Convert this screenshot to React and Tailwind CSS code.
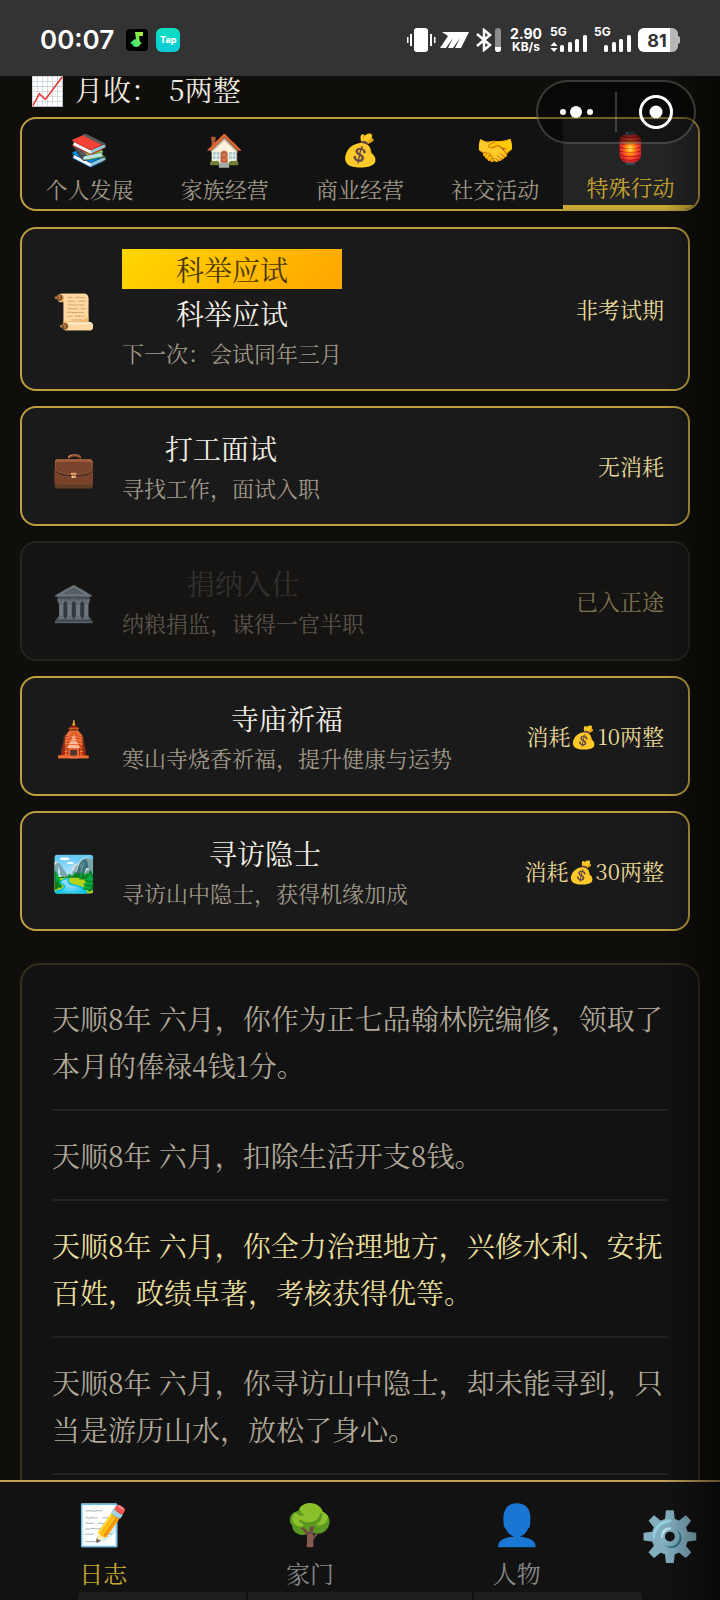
import { useState } from "react";

const tabs = [
  { id: 'self', icon: '📚', name: '个人发展' },
  { id: 'family', icon: '🏠', name: '家族经营' },
  { id: 'trade', icon: '💰', name: '商业经营' },
  { id: 'social', icon: '🤝', name: '社交活动' },
  { id: 'special', icon: '🏮', name: '特殊行动' },
];

const actions = [
  { icon: '📜', badge: '科举应试', name: '科举应试', desc: '下一次：会试同年三月', cost: '非考试期' },
  { icon: '💼', name: '打工面试', desc: '寻找工作，面试入职', cost: '无消耗' },
  { icon: '🏛️', name: '捐纳入仕', desc: '纳粮捐监，谋得一官半职', cost: '已入正途', disabled: true },
  { icon: '🛕', name: '寺庙祈福', desc: '寒山寺烧香祈福，提升健康与运势', cost: '消耗💰10两整' },
  { icon: '🏞️', name: '寻访隐士', desc: '寻访山中隐士，获得机缘加成', cost: '消耗💰30两整' },
];

const logs = [
  { text: '天顺8年 六月，你作为正七品翰林院编修，领取了本月的俸禄4钱1分。' },
  { text: '天顺8年 六月，扣除生活开支8钱。' },
  { text: '天顺8年 六月，你全力治理地方，兴修水利、安抚百姓，政绩卓著，考核获得优等。', good: true },
  { text: '天顺8年 六月，你寻访山中隐士，却未能寻到，只当是游历山水，放松了身心。' },
];

const pages = [
  { id: 'log', icon: '📝', name: '日志' },
  { id: 'home', icon: '🌳', name: '家门' },
  { id: 'people', icon: '👤', name: '人物' },
];

const Signal = ({ arrows }) => (
  <div className="relative w-10 h-7">
    <span className="absolute left-0 top-0 text-[12px] leading-3 font-bold">5G</span>
    <svg className="w-full h-full" viewBox="0 0 40 28" fill="#fff">
      {arrows && <path d="M4 16l3.5 4h-7zM4 26l3.5-4h-7z" />}
      <rect x="10" y="19" width="4" height="7" rx="1.5" />
      <rect x="18" y="16" width="4" height="10" rx="1.5" />
      <rect x="25" y="13" width="4" height="13" rx="1.5" />
      <rect x="33" y="9" width="4" height="17" rx="1.5" />
    </svg>
  </div>
);

const StatusBar = () => (
  <header className="shrink-0 flex items-center justify-between h-[76px] pt-1 px-10 bg-[#333] text-white font-['Inter',sans-serif]">
    <div className="flex items-center gap-2">
      <span className="text-[26px] leading-8 font-semibold mr-1">00:07</span>
      <svg className="w-[22px] h-[22px]" viewBox="0 0 22 22">
        <defs>
          <linearGradient id="note" x1="1" y1="0" x2="0" y2="1">
            <stop offset="0" stopColor="#b6f02c" />
            <stop offset="1" stopColor="#1de58c" />
          </linearGradient>
        </defs>
        <rect width="22" height="22" rx="4" fill="#000" />
        <path d="M9 3h8v4h-4l1 6 2 1-1.500 1a4.500 4.500 0 0 1-8.500 0l-2-1 2-1.500a4.500 4.500 0 0 1 4-2.500z" fill="url(#note)" />
      </svg>
      <span className="flex items-center justify-center w-6 h-6 rounded-md bg-linear-to-b from-[#0fe0c0] to-[#0cc8d6] text-[9px] font-extrabold">Tap</span>
    </div>
    <div className="flex items-center gap-1">
      <svg className="w-[30px] h-6" viewBox="0 0 30 24" fill="#fff">
        <rect x="8" width="14" height="24" rx="3" />
        <path d="M4 6h2v12H4zM24 6h2v12h-2zM1 9h1.500v6H1zM28 9h1.500v6H28z" />
      </svg>
      <svg className="w-[30px] h-6" viewBox="0 0 30 24" fill="#fff">
        <path d="M2 4h27l-8 16h-6l5-10-7 10H8l5-10-7 10H0l8-12z" />
      </svg>
      <svg className="w-7 h-6" viewBox="0 0 28 24" fill="none">
        <path d="M3 6l13 11-6 5V2l6 5L3 18" stroke="#fff" strokeWidth="2.500" />
        <rect x="21" width="6" height="24" rx="3" fill="#8c8c8c" />
        <path d="M21 19h6v2a3 3 0 0 1-6 0z" fill="#fff" />
      </svg>
      <div className="w-10 text-center font-bold">
        <p className="text-[14px] leading-[14px]">2.90</p>
        <p className="text-[12px] leading-3">KB/s</p>
      </div>
      <Signal arrows />
      <Signal />
      <div className="flex items-center">
        <span className="flex items-center justify-center w-10 h-6 pr-[2px] rounded-md bg-linear-to-r from-white from-80% to-[#b8b8b8] to-80% text-[#333] text-[18px] font-bold">81</span>
        <span className="w-[2px] h-2 rounded-r bg-[#b8b8b8]" />
      </div>
    </div>
  </header>
);

const Capsule = () => (
  <div className="absolute z-10 top-20 right-6 flex items-center w-40 h-16 rounded-full border-2 border-white/20 bg-black/40">
    <button aria-label="更多" className="flex-1 flex justify-center">
      <svg className="w-9 h-4" viewBox="0 0 36 16" fill="#fff">
        <circle cx="4" cy="8" r="3" />
        <circle cx="17" cy="8" r="6" />
        <circle cx="31" cy="8" r="3" />
      </svg>
    </button>
    <div className="w-[2px] h-10 bg-white/20" />
    <button aria-label="关闭" className="flex-1 flex justify-center">
      <svg className="w-9 h-9" viewBox="0 0 36 36">
        <circle cx="18" cy="18" r="15.500" fill="none" stroke="#fff" strokeWidth="3" />
        <circle cx="18" cy="18" r="6.500" fill="#fff" />
      </svg>
    </button>
  </div>
);

const ActionCard = ({ item }) => (
  <button
    disabled={item.disabled}
    className={`flex items-center w-full px-6 py-5 rounded-2xl border-2 bg-[#1a1a1a] ${item.disabled ? 'border-[#3a3a3a] opacity-50' : 'border-[#bd9f3e]'}`}
  >
    <span className="w-14 shrink-0 text-center text-[35px] leading-10">{item.icon}</span>
    <span className="flex flex-col gap-1 ml-5 text-center">
      {item.badge && <span className="text-[28px] leading-10 text-[#4a3705] bg-linear-135 from-[#ffd700] to-[#ffa500]">{item.badge}</span>}
      <span className={`text-[28px] leading-10 ${item.disabled ? 'text-[#555]' : 'text-[#f5f0e6]'}`}>{item.name}</span>
      <span className="text-[22px] leading-8 text-[#a09888]">{item.desc}</span>
    </span>
    <span className="ml-auto text-[22px] leading-8 text-[#e8d898]">{item.cost}</span>
  </button>
);

export default function App() {
  const [tab, setTab] = useState('special');
  const [page, setPage] = useState('log');

  return (
    <div className="relative flex flex-col h-screen overflow-hidden bg-[#100e0a] font-['Noto_Serif_CJK_SC','Noto_Sans_CJK_SC',serif]">
      <StatusBar />
      <Capsule />

      <p className="shrink-0 flex items-center gap-[10px] h-[41px] pb-4 px-[30px] text-[28px] leading-7 text-[#f0ebe0]">
        <span>📈</span>
        <span>月收：</span>
        <span>5两整</span>
      </p>

      <main className="flex-1 min-h-0 overflow-hidden px-5">
        <div className="flex h-[94px] rounded-2xl border-2 border-[#bd9f3e] bg-[#121212] overflow-hidden">
          {tabs.map(t => (
            <button
              key={t.id}
              onClick={() => setTab(t.id)}
              className={`flex-1 flex flex-col items-center justify-center gap-[5px] pt-1 ${t.id === tab ? 'bg-[#242424] text-[#c9a832] border-b-4 border-[#c9a832]' : 'text-[#a09888]'}`}
            >
              <span className="text-[31px] leading-10">{t.icon}</span>
              <span className="text-[22px] leading-8">{t.name}</span>
            </button>
          ))}
        </div>

        <div className="flex flex-col gap-[15px] mt-4 mr-[10px]">
          {actions.map(item => <ActionCard key={item.name} item={item} />)}
        </div>

        <ul className="mt-8 p-[30px] rounded-[20px] border-2 border-[#352e1c] bg-[#121212]">
          {logs.map((log, i) => (
            <li
              key={i}
              className={`pt-[21px] first:pt-0 pb-5 border-b-2 border-[#222] text-[28px] leading-[47px] ${log.good ? 'text-[#eadf9c]' : 'text-[#b0a898]'}`}
            >
              {log.text}
            </li>
          ))}
        </ul>
      </main>

      <nav className="shrink-0 h-[120px] border-t-2 border-[#c2a05a] bg-[#121212]">
        <div className="flex h-[110px]">
          {pages.map(p => (
            <button
              key={p.id}
              onClick={() => setPage(p.id)}
              className={`flex-1 flex flex-col items-center pt-4 ${p.id === page ? 'text-[#c9a832]' : 'text-[#888]'}`}
            >
              <span className="text-[40px] leading-[48px]">{p.icon}</span>
              <span className="text-[24px] leading-8 mt-[11px]">{p.name}</span>
            </button>
          ))}
          <button aria-label="设置" className="w-[100px] pb-2 text-[48px] text-white">⚙️</button>
        </div>
        <div className="flex gap-[2px] h-2 mx-[78px]">
          <div className="flex-3 rounded-tl bg-[#1e1e1e]" />
          <div className="flex-4 bg-[#1e1e1e]" />
          <div className="flex-3 rounded-tr bg-[#1e1e1e]" />
        </div>
      </nav>

      <div className="absolute bottom-0 right-0 top-[76px] w-14 pointer-events-none bg-linear-to-l from-black/50 to-transparent" />
    </div>
  );
}
